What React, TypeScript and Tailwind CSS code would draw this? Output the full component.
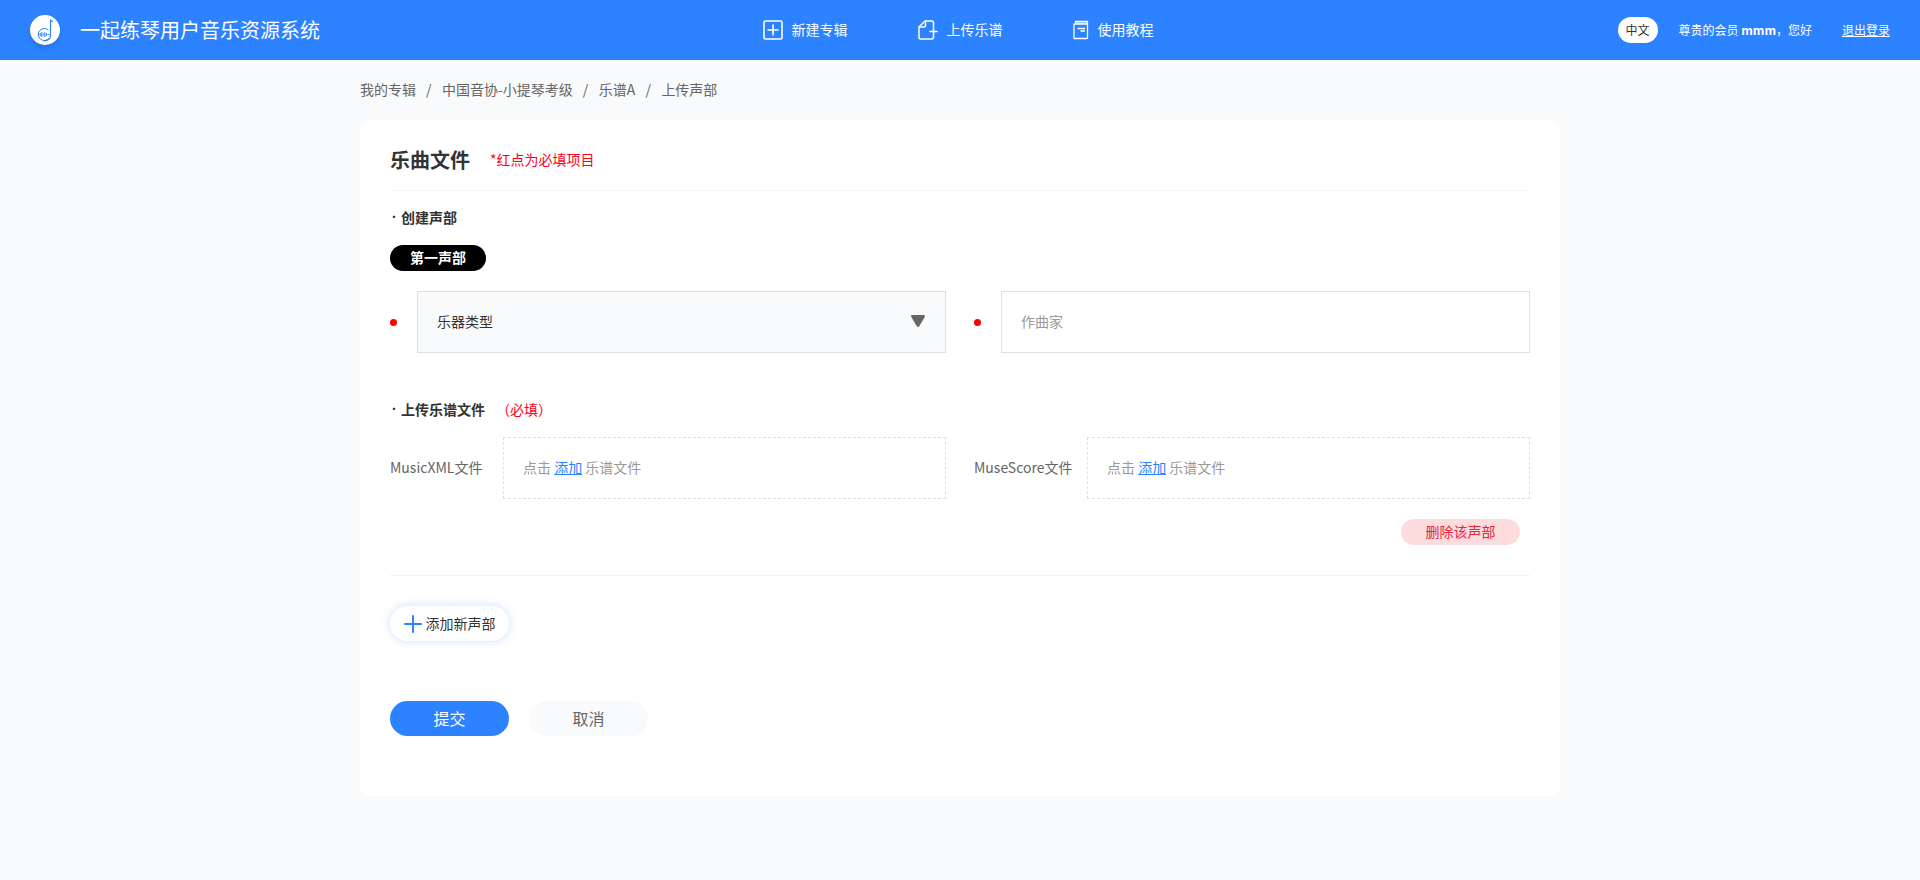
import { ReactNode } from "react";

const navItems = [
  { label: "新建专辑", icon: <NewAlbumIcon /> },
  { label: "上传乐谱", icon: <UploadIcon /> },
  { label: "使用教程", icon: <GuideIcon /> },
];

const crumbs = ["我的专辑", "中国音协-小提琴考级", "乐谱A"];

function Logo() {
  return (
    <svg viewBox="0 0 30 30" className="size-[30px] rounded-full bg-white shadow-md" fill="none" stroke="#2d82ff" aria-hidden="true">
      <path d="M18.5 15.2A6 6 0 1 0 18.8 23.500" strokeWidth="1" />
      <path d="M20.500 4.500V21C20.500 24 17.500 26 14 25.800" strokeWidth="1.200" />
      <path d="M20.500 4.800C20.800 6 22.200 5.800 22.600 7.200" strokeWidth="1.200" />
      <path d="M8 19.500H9.300M10.300 18V21M11.800 17V22M13.300 18.500V20.500M14.800 17V22M16.300 18V21M17.500 19.500H19.500" strokeWidth="1" />
    </svg>
  );
}

function NewAlbumIcon() {
  return (
    <svg viewBox="0 0 20 20" className="size-5" fill="none" stroke="currentColor" strokeWidth="1.6" strokeLinecap="round" aria-hidden="true">
      <rect x="1" y="1" width="18" height="18" rx="1.5" />
      <path d="M10 5V15M5 10H15" />
    </svg>
  );
}

function UploadIcon() {
  return (
    <svg viewBox="0 0 20 20" className="size-5" fill="none" stroke="currentColor" strokeWidth="1.5" strokeLinecap="round" strokeLinejoin="round" aria-hidden="true">
      <path d="M15.500 7V2.500A1.500 1.500 0 0 0 14 1H7L1 7V17.500A1.500 1.500 0 0 0 2.500 19H14A1.500 1.500 0 0 0 15.500 17.500V15.500" />
      <path d="M7.500 1.500V5.500A1.500 1.500 0 0 1 6 7H1.500" />
      <path d="M12 11.500H19M15.500 8V15" />
    </svg>
  );
}

function GuideIcon() {
  return (
    <svg viewBox="0 0 16 20" className="h-5 w-4" fill="none" stroke="currentColor" strokeWidth="1.300" strokeLinejoin="round" aria-hidden="true">
      <path d="M2.500 4V1.500H14.500V4" />
      <path d="M3 2H14V4H3Z" fill="currentColor" fillOpacity="0.4" stroke="none" />
      <rect x="1" y="4" width="13.500" height="14.500" rx="0.500" />
      <path d="M4.500 8.500H12M7.500 11H12" />
    </svg>
  );
}

function Header() {
  return (
    <header className="grid h-[60px] grid-cols-[1fr_auto_1fr] items-center bg-[#2d82ff] px-[30px] text-white">
      <div className="flex items-center gap-5">
        <Logo />
        <h1 className="text-xl">一起练琴用户音乐资源系统</h1>
      </div>
      <nav className="mr-1 flex items-center gap-[70px]">
        {navItems.map((item) => (
          <a key={item.label} href="#" className="flex items-center gap-[9px] text-sm">
            {item.icon}
            <span className="pb-0.5">{item.label}</span>
          </a>
        ))}
      </nav>
      <div className="flex items-center justify-end text-xs">
        <button type="button" className="h-[26px] w-10 rounded-full bg-white text-[#333]">
          中文
        </button>
        <p className="ml-[21px]">
          尊贵的会员 <b>mmm</b>，您好
        </p>
        <a href="#" className="ml-[30px] underline">
          退出登录
        </a>
      </div>
    </header>
  );
}

function Breadcrumb() {
  return (
    <nav className="flex h-[60px] items-center gap-2.5 pb-0.5 text-sm text-[#666]">
      {crumbs.map((crumb) => (
        <span key={crumb} className="flex gap-2.5">
          <a href="#">{crumb}</a>
          <span className="w-1.5">/</span>
        </span>
      ))}
      <span>上传声部</span>
    </nav>
  );
}

function SectionTitle({ children }: { children: ReactNode }) {
  return (
    <h3 className="flex items-center text-sm font-bold">
      <span className="w-[11px] pl-0.5 font-['Noto_Sans',sans-serif]">·</span>
      {children}
    </h3>
  );
}

function RequiredDot() {
  return <span className="size-[7px] shrink-0 rounded-full bg-[#f00]" />;
}

function FileField({ id, label }: { id: string; label: string }) {
  return (
    <div className="flex items-center">
      <label htmlFor={id} className="w-[113px] shrink-0 pb-0.5 text-[#666]">
        {label}
      </label>
      <div className="flex h-[62px] flex-1 items-center border border-dashed border-[#dfe0e1] px-[19px] pb-0.5 text-[#999]">
        <p>
          点击{" "}
          <label htmlFor={id} className="cursor-pointer text-[#2d82ff] underline">
            添加
          </label>{" "}
          乐谱文件
        </p>
        <input id={id} type="file" className="hidden" />
      </div>
    </div>
  );
}

export default function App() {
  return (
    <div className="min-h-screen bg-[#f8fafc] font-['Noto_Sans_CJK_SC',sans-serif] text-[#333]">
      <Header />
      <main className="mx-auto max-w-[1200px]">
        <Breadcrumb />
        <form className="rounded-[10px] bg-white px-[30px] pb-[60px] text-sm">
          <div className="flex h-[71px] items-center gap-5 border-b border-[#f2f3f4] pt-2.5">
            <h2 className="text-xl font-bold">乐曲文件</h2>
            <p className="pb-0.5 text-[#ff0019]">*红点为必填项目</p>
          </div>

          <section className="border-b border-[#f2f3f4] pt-4 pb-[30px]">
            <SectionTitle>创建声部</SectionTitle>
            <span className="mt-[18px] flex h-[26px] w-24 items-center justify-center rounded-full bg-black pb-0.5 font-bold text-white">第一声部</span>

            <div className="mt-5 grid grid-cols-2 gap-7">
              <div className="flex items-center gap-5">
                <RequiredDot />
                <div className="relative flex-1">
                  <select aria-label="乐器类型" className="block h-[62px] w-full appearance-none border border-[#dfe0e1] bg-[#f8fafc] px-[19px] pb-0.5">
                    <option>乐器类型</option>
                  </select>
                  <svg viewBox="0 0 14 12" className="pointer-events-none absolute top-6 right-[21px] h-3 w-3.5" fill="#666" aria-hidden="true">
                    <path d="M1.500 0H12.500C13.800 0 14.300 1.200 13.600 2.200L8.200 11.200C7.600 12.200 6.400 12.200 5.800 11.200L.4 2.200C-.3 1.200.2 0 1.500 0Z" />
                  </svg>
                </div>
              </div>
              <div className="flex items-center gap-5">
                <RequiredDot />
                <input type="text" aria-label="作曲家" placeholder="作曲家" className="h-[62px] flex-1 border border-[#dfe0e1] px-[19px] pb-0.5 placeholder:text-[#999]" />
              </div>
            </div>

            <div className="mt-[46px] flex items-center gap-[11px]">
              <SectionTitle>上传乐谱文件</SectionTitle>
              <span className="text-[#ff0019]">（必填）</span>
            </div>
            <div className="mt-[18px] grid grid-cols-2 gap-7">
              <FileField id="musicxml" label="MusicXML文件" />
              <FileField id="musescore" label="MuseScore文件" />
            </div>
            <div className="mt-5 flex justify-end pr-2.5">
              <button type="button" className="h-[26px] w-[119px] rounded-full bg-[#fddcde] pb-0.5 text-[#ea2440]">
                删除该声部
              </button>
            </div>
          </section>

          <button type="button" className="mt-[30px] flex h-[35px] w-[119px] items-center justify-center gap-1 rounded-full bg-white shadow-[0_0_10px_rgba(45,130,255,0.25)]">
            <svg viewBox="0 0 18 18" className="size-[18px]" stroke="#2d82ff" strokeWidth="2" strokeLinecap="round" aria-hidden="true">
              <path d="M9 1V17M1 9H17" />
            </svg>
            <span className="pb-0.5">添加新声部</span>
          </button>

          <div className="mt-[60px] flex gap-5 text-base">
            <button type="submit" className="h-[35px] w-[119px] rounded-full bg-[#2d82ff] pb-0.5 text-white">
              提交
            </button>
            <button type="button" className="h-[35px] w-[119px] rounded-full bg-[#f8fafc] pb-0.5 text-[#666]">
              取消
            </button>
          </div>
        </form>
      </main>
    </div>
  );
}
